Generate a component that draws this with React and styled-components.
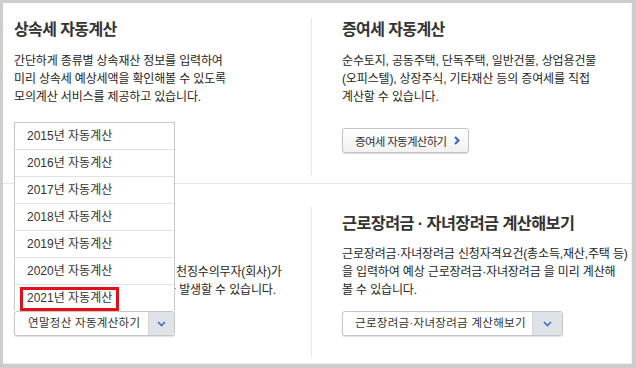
import React from "react";
import styled, { createGlobalStyle } from "styled-components";

const GlobalStyle = createGlobalStyle`
  html, body {
    margin: 0;
    padding: 0;
    background: #fff;
  }
  body {
    font-family: "Liberation Sans", "Noto Sans CJK KR", sans-serif;
    color: #222;
  }
`;

const years = [2015, 2016, 2017, 2018, 2019, 2020, 2021];

const ChevronRight = () => (
  <svg width="6" height="9" viewBox="0 0 6 9">
    <polyline points="1,1 4.5,4.5 1,8" fill="none" stroke="#3465bd" strokeWidth="2" />
  </svg>
);

const ChevronDown = () => (
  <svg width="9" height="6" viewBox="0 0 9 6">
    <polyline points="1,1 4.5,4.5 8,1" fill="none" stroke="#3f6fc6" strokeWidth="1.6" />
  </svg>
);

const App = () => {
  return (
    <>
      <GlobalStyle />
      <Frame>
        <Row>
          <Section $w={308} $left={11} $top={15}>
            <Title>상속세 자동계산</Title>
            <Desc>
              간단하게 종류별 상속재산 정보를 입력하여
              <br />
              미리 상속세 예상세액을 확인해볼 수 있도록
              <br />
              모의계산 서비스를 제공하고 있습니다.
            </Desc>
            <Action $gap={22}>
              <LinkButton>
                상속세 자동계산하기
                <ChevronRight />
              </LinkButton>
            </Action>
          </Section>
          <Divider $top={15} $bottom={8} />
          <Section $left={30} $top={15}>
            <Title>증여세 자동계산</Title>
            <Desc>
              순수토지, 공동주택, 단독주택, 일반건물, 상업용건물
              <br />
              (오피스텔), 상장주식, 기타재산 등의 증여세를 직접
              <br />
              계산할 수 있습니다.
            </Desc>
            <Action $gap={22}>
              <LinkButton>
                증여세 자동계산하기
                <ChevronRight />
              </LinkButton>
            </Action>
          </Section>
        </Row>
        <Row>
          <Section $w={308} $left={11} $top={27}>
            <Title $size={16.3}>연말정산 자동계산</Title>
            <Desc>
              연말정산 시 근로자와
              <br />
              근로자 근로소득세를 신고하는 원천징수의무자(회사)가
              <br />
              추가 납부하거나 환급받는 경우가 발생할 수 있습니다.
            </Desc>
            <Action $gap={12}>
              <Select $w={161}>
                <Menu>
                  {years.map((y) => (
                    <MenuItem key={y}>
                      {y}년 자동계산
                      {y === 2021 && <Highlight />}
                    </MenuItem>
                  ))}
                </Menu>
                <SelectLabel $pad={13}>연말정산 자동계산하기</SelectLabel>
                <SelectArrow $w={25}>
                  <ChevronDown />
                </SelectArrow>
              </Select>
            </Action>
          </Section>
          <Divider $top={23} $bottom={7} />
          <Section $left={30} $top={27}>
            <Title $size={16.3}>근로장려금 · 자녀장려금 계산해보기</Title>
            <Desc>
              근로장려금·자녀장려금 신청자격요건(총소득,재산,주택 등)
              <br />
              을 입력하여 예상 근로장려금·자녀장려금 을 미리 계산해
              <br />
              볼 수 있습니다.
            </Desc>
            <Action $gap={12}>
              <Select $w={221}>
                <SelectLabel $pad={12}>근로장려금·자녀장려금 계산해보기</SelectLabel>
                <SelectArrow $w={29}>
                  <ChevronDown />
                </SelectArrow>
              </Select>
            </Action>
          </Section>
        </Row>
      </Frame>
    </>
  );
};

const Frame = styled.div`
  width: 636px;
  height: 368px;
  box-sizing: border-box;
  border: 3px solid #cdcdcd;
  border-right-width: 4px;
  border-bottom-width: 4px;
  background: #fff;
  box-shadow: inset -1px -1px 0 #f0f0f0;
  display: flex;
  flex-direction: column;
  overflow: hidden;
`;

const Row = styled.div`
  display: flex;
  height: 180px;
  & + & {
    border-top: 1px solid #e6e6e6;
  }
`;

const Section = styled.section`
  ${(p) => (p.$w ? `width: ${p.$w}px;` : "flex: 1;")}
  box-sizing: border-box;
  padding: ${(p) => p.$top}px 0 0 ${(p) => p.$left}px;
  display: flex;
  flex-direction: column;
  align-items: flex-start;
`;

const Divider = styled.div`
  width: 1px;
  background: #e8e8e8;
  margin: ${(p) => p.$top}px 0 ${(p) => p.$bottom}px;
`;

const Title = styled.h2`
  margin: 0 0 10px;
  font-size: ${(p) => p.$size || 16}px;
  line-height: 24px;
  font-weight: 700;
  letter-spacing: -0.6px;
  color: #333;
  white-space: nowrap;
`;

const Desc = styled.p`
  margin: 0;
  font-size: 12px;
  line-height: 18px;
  letter-spacing: -0.15px;
  color: #1e1e1e;
  white-space: nowrap;
`;

const Action = styled.div`
  margin-top: ${(p) => p.$gap}px;
`;

const LinkButton = styled.button`
  display: inline-flex;
  align-items: center;
  gap: 8px;
  height: 25px;
  box-sizing: border-box;
  padding: 0 8px 0 12px;
  border: 1px solid #c3c3c3;
  border-radius: 3px;
  background: linear-gradient(#ffffff, #f1f1f1);
  box-shadow: 0 1px 1px rgba(0, 0, 0, 0.15);
  font-family: inherit;
  font-size: 11.5px;
  letter-spacing: -0.7px;
  color: #333;
  white-space: nowrap;
  cursor: pointer;
`;

const Select = styled.div`
  position: relative;
  display: flex;
  width: ${(p) => p.$w}px;
  height: 25px;
  box-sizing: border-box;
  border: 1px solid #c6c6c6;
  border-radius: 3px;
  background: #fff;
  box-shadow: 0 1px 1px rgba(0, 0, 0, 0.12);
`;

const SelectLabel = styled.span`
  flex: 1;
  padding-left: ${(p) => p.$pad}px;
  font-size: 11.5px;
  line-height: 23px;
  letter-spacing: 0.3px;
  color: #333;
  white-space: nowrap;
`;

const SelectArrow = styled.span`
  width: ${(p) => p.$w}px;
  display: flex;
  align-items: center;
  justify-content: center;
  background: #dfe3e8;
  border-left: 1px solid #d2d6db;
  border-radius: 0 2px 2px 0;
`;

const Menu = styled.ul`
  position: absolute;
  left: -1px;
  right: -1px;
  bottom: 100%;
  margin: 0 0 1px;
  padding: 0;
  list-style: none;
  background: #fff;
  border: 1px solid #c9c9c9;
  border-bottom: none;
  z-index: 5;
`;

const MenuItem = styled.li`
  position: relative;
  height: 26px;
  padding-left: 12px;
  font-size: 12px;
  line-height: 26px;
  letter-spacing: 0;
  color: #333;
  white-space: nowrap;
  & + & {
    border-top: 1px solid #e2e2e2;
  }
`;

const Highlight = styled.span`
  position: absolute;
  left: 5px;
  top: 2px;
  width: 99px;
  height: 24px;
  box-sizing: border-box;
  border: 3px solid #e3101a;
`;

export default App;
